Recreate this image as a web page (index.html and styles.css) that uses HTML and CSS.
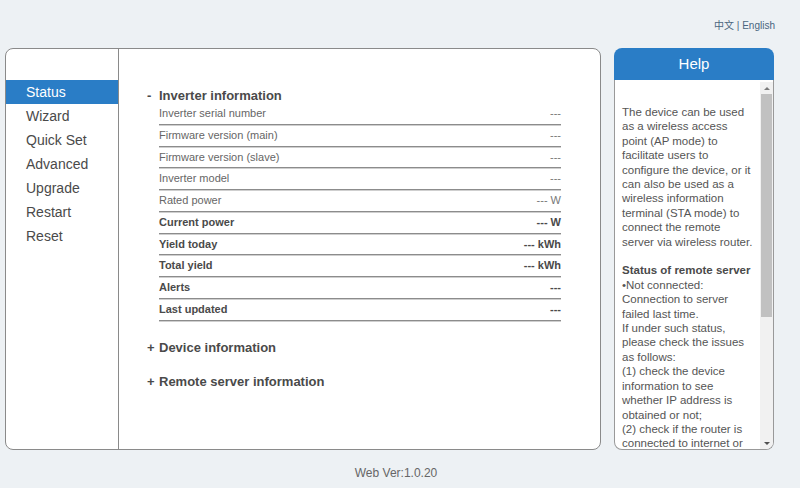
FILE: index.html
```html
<!DOCTYPE html>
<html lang="en">
<head>
<meta charset="utf-8">
<title>Status</title>
<link rel="stylesheet" href="styles.css">
</head>
<body>
<div class="lang"><a href="#">中文</a> | <a href="#">English</a></div>

<div class="layout">
  <div class="main">
    <ul class="nav">
      <li class="active">Status</li>
      <li>Wizard</li>
      <li>Quick Set</li>
      <li>Advanced</li>
      <li>Upgrade</li>
      <li>Restart</li>
      <li>Reset</li>
    </ul>

    <div class="content">
      <div class="section-title"><span class="toggle">-</span>Inverter information</div>
      <div class="rows">
        <div class="row"><span>Inverter serial number</span><span>---</span></div>
        <div class="row"><span>Firmware version (main)</span><span>---</span></div>
        <div class="row"><span>Firmware version (slave)</span><span>---</span></div>
        <div class="row"><span>Inverter model</span><span>---</span></div>
        <div class="row"><span>Rated power</span><span>--- W</span></div>
        <div class="row strong"><span>Current power</span><span>--- W</span></div>
        <div class="row strong"><span>Yield today</span><span>--- kWh</span></div>
        <div class="row strong"><span>Total yield</span><span>--- kWh</span></div>
        <div class="row strong"><span>Alerts</span><span>---</span></div>
        <div class="row strong"><span>Last updated</span><span>---</span></div>
      </div>
      <div class="section-title collapsed first"><span class="toggle">+</span>Device information</div>
      <div class="section-title collapsed"><span class="toggle">+</span>Remote server information</div>
    </div>
  </div>

  <div class="help">
    <div class="help-head">Help</div>
    <div class="help-body">
      <div class="help-text">
        <p>The device can be used as a wireless access point (AP mode) to facilitate users to configure the device, or it can also be used as a wireless information terminal (STA mode) to connect the remote server via wireless router.</p>
        <p><b>Status of remote server</b><br>
        &bull;Not connected: Connection to server failed last time.<br>
        If under such status, please check the issues as follows:<br>
        (1) check the device information to see whether IP address is obtained or not;<br>
        (2) check if the router is connected to internet or not;</p>
      </div>
      <div class="scrollbar">
        <span class="arrow up"></span>
        <span class="track"><span class="thumb"></span></span>
        <span class="arrow down"></span>
      </div>
    </div>
  </div>
</div>

<div class="footer">Web Ver:1.0.20</div>
</body>
</html>
```
FILE: styles.css
```css
html, body {
  margin: 0;
  padding: 0;
}

body {
  background: #edf1f4;
  font-family: "Liberation Sans", Arial, "Noto Sans CJK SC", sans-serif;
  color: #555;
  width: 800px;
  min-height: 488px;
}

/* language switch */
.lang {
  height: 48px;
  box-sizing: border-box;
  padding: 20px 25px 0 0;
  text-align: right;
  font-size: 10px;
  line-height: 12px;
  color: #4a6680;
}
.lang a {
  color: #4a6680;
  text-decoration: none;
}

.layout {
  display: flex;
  gap: 13px;
  padding-left: 5px;
  height: 402px;
}

/* main panel */
.main {
  width: 596px;
  box-sizing: border-box;
  background: #fff;
  border: 1px solid #8a8a8a;
  border-radius: 8px;
  display: flex;
  overflow: hidden;
}

.nav {
  list-style: none;
  margin: 0;
  padding: 31px 0 0 0;
  width: 113px;
  box-sizing: border-box;
  border-right: 1px solid #8a8a8a;
}
.nav li {
  height: 24px;
  line-height: 24px;
  padding-left: 20px;
  font-size: 14px;
  color: #4a4a4a;
}
.nav li.active {
  background: #2a7dc6;
  color: #fff;
}

.content {
  flex: 1;
  padding: 39px 0 0 28px;
}

.section-title {
  font-size: 13px;
  font-weight: bold;
  line-height: 16px;
  color: #4a4a4a;
  display: flex;
}
.section-title .toggle {
  width: 12px;
  font-weight: bold;
}
.section-title.first {
  margin-top: 19px;
}
.section-title.collapsed + .section-title.collapsed {
  margin-top: 18px;
}

.rows {
  margin-left: 12px;
  width: 402px;
}
.row {
  display: flex;
  justify-content: space-between;
  height: 19.78px;
  line-height: 19px;
  font-size: 11px;
  color: #666;
  border-bottom: 1px solid #8c8c8c;
  box-shadow: 0 1px 0 #cfcfcf;
  margin-bottom: 1px;
}
.row span:last-child {
  color: #777;
}
.row.strong {
  font-weight: bold;
  color: #4a4a4a;
}
.row.strong span:last-child {
  color: #4a4a4a;
}

/* help panel */
.help {
  width: 160px;
  display: flex;
  flex-direction: column;
}
.help-head {
  height: 32px;
  line-height: 32px;
  background: #2a7dc6;
  border-radius: 8px 8px 0 0;
  color: #fff;
  font-size: 15px;
  text-align: center;
}
.help-body {
  flex: 1;
  display: flex;
  background: #fff;
  border: 1px solid #999;
  border-top: none;
  border-radius: 0 0 8px 8px;
  overflow: hidden;
  min-height: 0;
}
.help-text {
  flex: 1;
  padding: 25px 5px 0 7px;
  font-size: 11.5px;
  line-height: 14.4px;
  color: #555;
  overflow: hidden;
}
.help-text p {
  margin: 0 0 14.4px 0;
}
.help-text b {
  color: #4a4a4a;
}

.scrollbar {
  width: 13px;
  display: flex;
  flex-direction: column;
  background: #f1f1f1;
  margin: 2px 0 0 0;
}
.arrow {
  height: 12px;
  display: flex;
  align-items: center;
  justify-content: center;
}
.arrow::before {
  content: "";
  border-left: 3px solid transparent;
  border-right: 3px solid transparent;
}
.arrow.up::before {
  border-bottom: 3px solid #7a7a7a;
}
.arrow.down::before {
  border-top: 3px solid #505050;
}
.track {
  flex: 1;
  display: flex;
  flex-direction: column;
  padding: 0 1px;
}
.thumb {
  height: 223px;
  background: #c1c1c1;
}

.footer {
  text-align: center;
  padding: 16px 8px 0 0;
  font-size: 12px;
  line-height: 14px;
  color: #666;
}
```
